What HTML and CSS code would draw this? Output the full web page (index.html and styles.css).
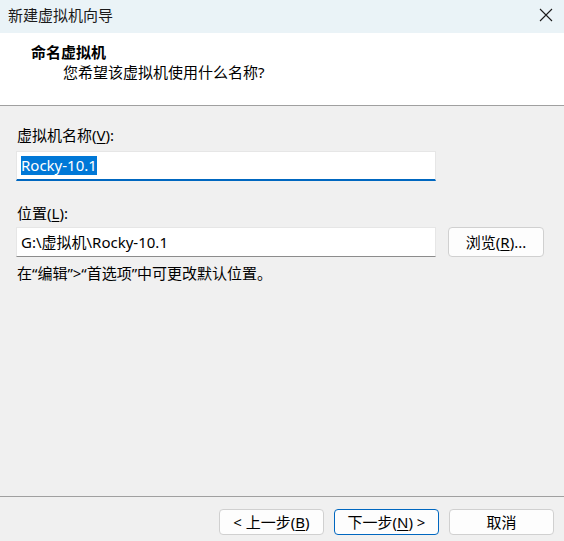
FILE: index.html
```html
<!DOCTYPE html>
<html lang="zh-CN">
<head>
<meta charset="utf-8">
<title>新建虚拟机向导</title>
<link rel="stylesheet" href="styles.css">
</head>
<body>
<div class="window">
  <div class="titlebar">
    <span class="title">新建虚拟机向导</span>
    <svg class="close" width="14" height="14" viewBox="0 0 14 14"><path d="M1 1L13 13M13 1L1 13" stroke="#1b1b1b" stroke-width="1.1" fill="none"/></svg>
  </div>
  <div class="header">
    <div class="h-title">命名虚拟机</div>
    <div class="h-sub">您希望该虚拟机使用什么名称?</div>
  </div>
  <div class="content">
    <div class="label label-first">虚拟机名称(<u>V</u>):</div>
    <div class="field field-focus"><span class="sel">Rocky-10.1</span></div>
    <div class="label label-second">位置(<u>L</u>):</div>
    <div class="row">
      <div class="field field-plain">G:\虚拟机\Rocky-10.1</div>
      <div class="btn btn-browse">浏览(<u>R</u>)...</div>
    </div>
    <div class="hint">在“编辑”&gt;“首选项”中可更改默认位置。</div>
  </div>
  <div class="footer">
    <div class="btn">&lt; 上一步(<u>B</u>)</div>
    <div class="btn btn-default">下一步(<u>N</u>) &gt;</div>
    <div class="btn">取消</div>
  </div>
</div>
</body>
</html>
```
FILE: styles.css
```css
* { box-sizing: border-box; }
html, body { margin: 0; padding: 0; }
body {
  font-family: "Noto Sans", "Noto Sans CJK SC", sans-serif;
  font-size: 15px;
  color: #000;
  background: #f0f0f0;
}
.window {
  width: 564px;
  height: 541px;
  display: flex;
  flex-direction: column;
  background: #f0f0f0;
}
.titlebar {
  height: 33px;
  flex: none;
  background: #eaf3f7;
  display: flex;
  align-items: center;
  justify-content: space-between;
  padding: 0 11px 4px 8px;
}
.title { color: #1a1a1a; line-height: 20px; }
.close { display: block; }
.header {
  flex: none;
  height: 73px;
  background: #fff;
  border-bottom: 1px solid #a0a0a0;
  padding: 9px 0 0 31px;
  line-height: 20px;
}
.h-title { font-weight: bold; }
.h-sub { padding-left: 32px; }
.content {
  flex: 1;
  padding: 0 0 0 16px;
  line-height: 20px;
}
.label { padding-left: 1px; }
.label-first { margin-top: 19px; }
.label-second { margin-top: 22px; }
.field {
  width: 420px;
  height: 30px;
  background: #fff;
  border: 1px solid #e6e6e6;
  padding-left: 4px;
  display: flex;
  align-items: center;
}
.field-focus {
  margin-top: 6px;
  border-bottom: 2px solid #0067c0;
  padding-bottom: 1px;
}
.sel {
  background: #0078d7;
  color: #fff;
  line-height: 19px;
}
.field-plain {
  border-bottom: 1px solid #8c8c8c;
}
.row {
  margin-top: 4px;
  display: flex;
  align-items: center;
  gap: 12px;
}
.btn {
  width: 105px;
  height: 26px;
  border: 1px solid #d0d0d0;
  border-radius: 4px;
  background: #fdfdfd;
  display: flex;
  align-items: center;
  justify-content: center;
  line-height: 20px;
}
.btn-browse { width: 96px; height: 30px; }
.btn-default { border-color: #0067c0; }
.hint { margin-top: 6px; padding-left: 1px; }
.footer {
  flex: none;
  height: 45px;
  border-top: 1px solid #a0a0a0;
  display: flex;
  justify-content: flex-end;
  align-items: flex-start;
  gap: 10px;
  padding: 12px 10px 0 0;
}
u { text-decoration: underline; text-underline-offset: 2px; }
```
